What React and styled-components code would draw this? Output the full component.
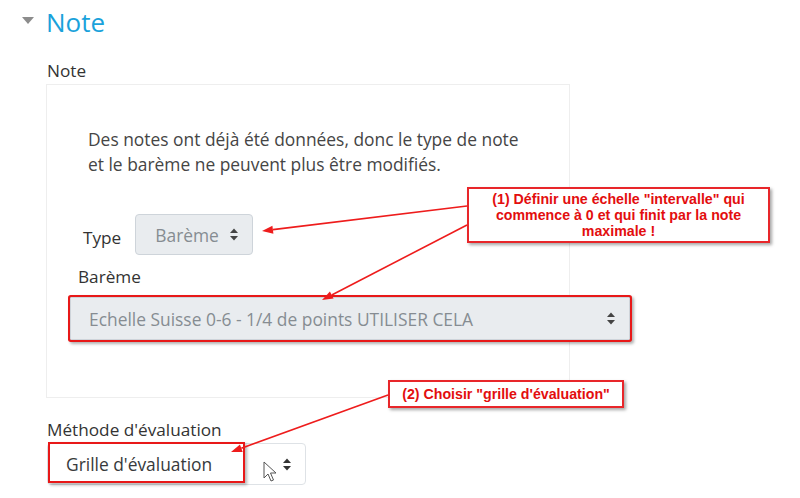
import React from 'react';
import styled, { createGlobalStyle } from 'styled-components';

const Global = createGlobalStyle`
  html, body { margin: 0; padding: 0; background: #fff; }
  body { font-family: "Open Sans", "Noto Sans", sans-serif; color: #373a3c; }
`;

const Page = styled.div`
  position: relative;
  width: 800px;
  height: 498px;
  overflow: hidden;
  padding-top: 6px;
  box-sizing: border-box;
`;

const SectionHeader = styled.div`
  display: flex;
  align-items: center;
  gap: 12px;
  height: 32px;
  padding-left: 22px;
`;

const Caret = styled.span`
  width: 0;
  height: 0;
  border-left: 6.5px solid transparent;
  border-right: 6.5px solid transparent;
  border-top: 7px solid #8c8c8c;
  margin-top: -3px;
`;

const Title = styled.h2`
  margin: 0;
  font-weight: 400;
  font-size: 26px;
  line-height: 32px;
  color: #1aa2db;
`;

const Content = styled.div`
  padding-left: 47px;
  display: flex;
  flex-direction: column;
  align-items: flex-start;
`;

const Label = styled.div`
  font-size: 17.2px;
  line-height: 24px;
  color: #333;
  margin-top: ${p => p.$mt || 0}px;
  margin-left: ${p => p.$ml || 0}px;
`;

const Fieldset = styled.div`
  margin-left: -1px;
  margin-top: 1px;
  width: 524px;
  height: 314px;
  box-sizing: border-box;
  border: 1.5px solid #eeeeee;
  padding-top: 42px;
  display: flex;
  flex-direction: column;
  align-items: flex-start;
`;

const Info = styled.p`
  margin: 0 0 0 41px;
  font-size: 17.4px;
  line-height: 24.5px;
  color: #454545;
  white-space: nowrap;
`;

const Row = styled.div`
  display: flex;
  align-items: center;
  gap: 14px;
  margin-left: 36px;
  margin-top: 38px;
`;

const RowLabel = styled.span`
  font-size: 17.2px;
  color: #333;
  margin-top: 6px;
`;

const Select = styled.div`
  box-sizing: border-box;
  width: ${p => p.$w}px;
  height: ${p => p.$h || 41}px;
  display: flex;
  align-items: center;
  justify-content: space-between;
  padding: 0 13px 0 ${p => p.$pl || 18}px;
  border: 1px solid ${p => (p.$disabled ? '#ced4da' : '#dee2e6')};
  border-radius: 4px;
  background: ${p => (p.$disabled ? '#e9ecef' : '#fff')};
  color: ${p => (p.$disabled ? '#868c92' : '#373a3c')};
  font-size: 17.4px;
  white-space: nowrap;
  margin-left: ${p => p.$ml || 0}px;
  margin-top: ${p => p.$mt || 0}px;
  ${p => p.$highlight && `
    border-radius: 1px;
    box-shadow: 0 0 0 2px #e81818, 2px 2px 3px 2px rgba(0,0,0,0.3);
  `}
`;

const Arrows = ({ color = '#333' }) => (
  <svg width="10" height="13" viewBox="0 0 10 13">
    <polygon points="1,5 9,5 5,0.5" fill={color} />
    <polygon points="1,8 9,8 5,12.5" fill={color} />
  </svg>
);

const Callout = styled.div`
  position: absolute;
  left: ${p => p.$x}px;
  top: ${p => p.$y}px;
  width: ${p => p.$w}px;
  height: ${p => p.$h}px;
  box-sizing: border-box;
  border: 2px solid #e8262a;
  background: #fff;
  box-shadow: 2px 2px 3px rgba(0, 0, 0, 0.35);
  display: flex;
  align-items: center;
  justify-content: center;
  text-align: center;
  font-family: "Liberation Sans", Arial, sans-serif;
  font-weight: 700;
  font-size: 14.2px;
  line-height: 16px;
  color: #e30e0e;
  padding: 0 2px;
  white-space: nowrap;
`;

const Frame = styled.div`
  position: absolute;
  left: ${p => p.$x}px;
  top: ${p => p.$y}px;
  width: ${p => p.$w}px;
  height: ${p => p.$h}px;
  box-sizing: border-box;
  border: 2px solid #e81818;
  box-shadow: 2px 2px 3px rgba(0, 0, 0, 0.3);
`;

const Overlay = styled.svg`
  position: absolute;
  left: 0;
  top: 0;
  pointer-events: none;
`;

const Cursor = styled.svg`
  position: absolute;
  left: 263px;
  top: 461px;
`;

function Arrow({ x1, y1, x2, y2 }) {
  const a = Math.atan2(y2 - y1, x2 - x1);
  const L = 11, W = 4;
  const bx = x2 - L * Math.cos(a), by = y2 - L * Math.sin(a);
  const px = -Math.sin(a) * W, py = Math.cos(a) * W;
  return (
    <g>
      <line x1={x1} y1={y1} x2={bx} y2={by} stroke="#ee1c1c" strokeWidth="1.6" />
      <polygon points={`${x2},${y2} ${bx + px},${by + py} ${bx - px},${by - py}`} fill="#ee1c1c" />
    </g>
  );
}

export default function App() {
  return (
    <>
      <Global />
      <Page>
        <SectionHeader>
          <Caret />
          <Title>Note</Title>
        </SectionHeader>
        <Content>
          <Label $mt={21}>Note</Label>
          <Fieldset>
            <Info>
              Des notes ont déjà été données, donc le type de note
              <br />
              et le barème ne peuvent plus être modifiés.
            </Info>
            <Row>
              <RowLabel>Type</RowLabel>
              <Select $disabled $w={118} $pl={19}>
                <span>Barème</span>
                <Arrows color="#444" />
              </Select>
            </Row>
            <Label $ml={31} $mt={10}>Barème</Label>
            <Select $disabled $highlight $w={560} $h={43} $ml={23} $mt={8}>
              <span>Echelle Suisse 0-6 - 1/4 de points UTILISER CELA</span>
              <Arrows color="#444" />
            </Select>
          </Fieldset>
          <Label $mt={20}>Méthode d'évaluation</Label>
          <Select $w={259} $h={42} $mt={1}>
            <span>Grille d'évaluation</span>
            <Arrows />
          </Select>
        </Content>

        <Frame $x={48} $y={442} $w={197} $h={41} />

        <Overlay width="800" height="498" viewBox="0 0 800 498">
          <Arrow x1={467} y1={206} x2={262} y2={231} />
          <Arrow x1={467} y1={225} x2={322} y2={300} />
          <Arrow x1={388} y1={395} x2={231} y2={452} />
        </Overlay>

        <Callout $x={467} $y={187} $w={303} $h={56}>
          (1) Définir une échelle "intervalle" qui
          <br />
          commence à 0 et qui finit par la note
          <br />
          maximale !
        </Callout>
        <Callout $x={388} $y={380} $w={236} $h={28}>
          (2) Choisir "grille d'évaluation"
        </Callout>

        <Cursor width="14" height="22" viewBox="0 0 14 22">
          <path d="M1 1 L1 17 L5 13 L8 20 L10.5 19 L7.5 12 L13 12 Z" fill="#fff" stroke="#555" strokeWidth="1" strokeLinejoin="round" />
        </Cursor>
      </Page>
    </>
  );
}
